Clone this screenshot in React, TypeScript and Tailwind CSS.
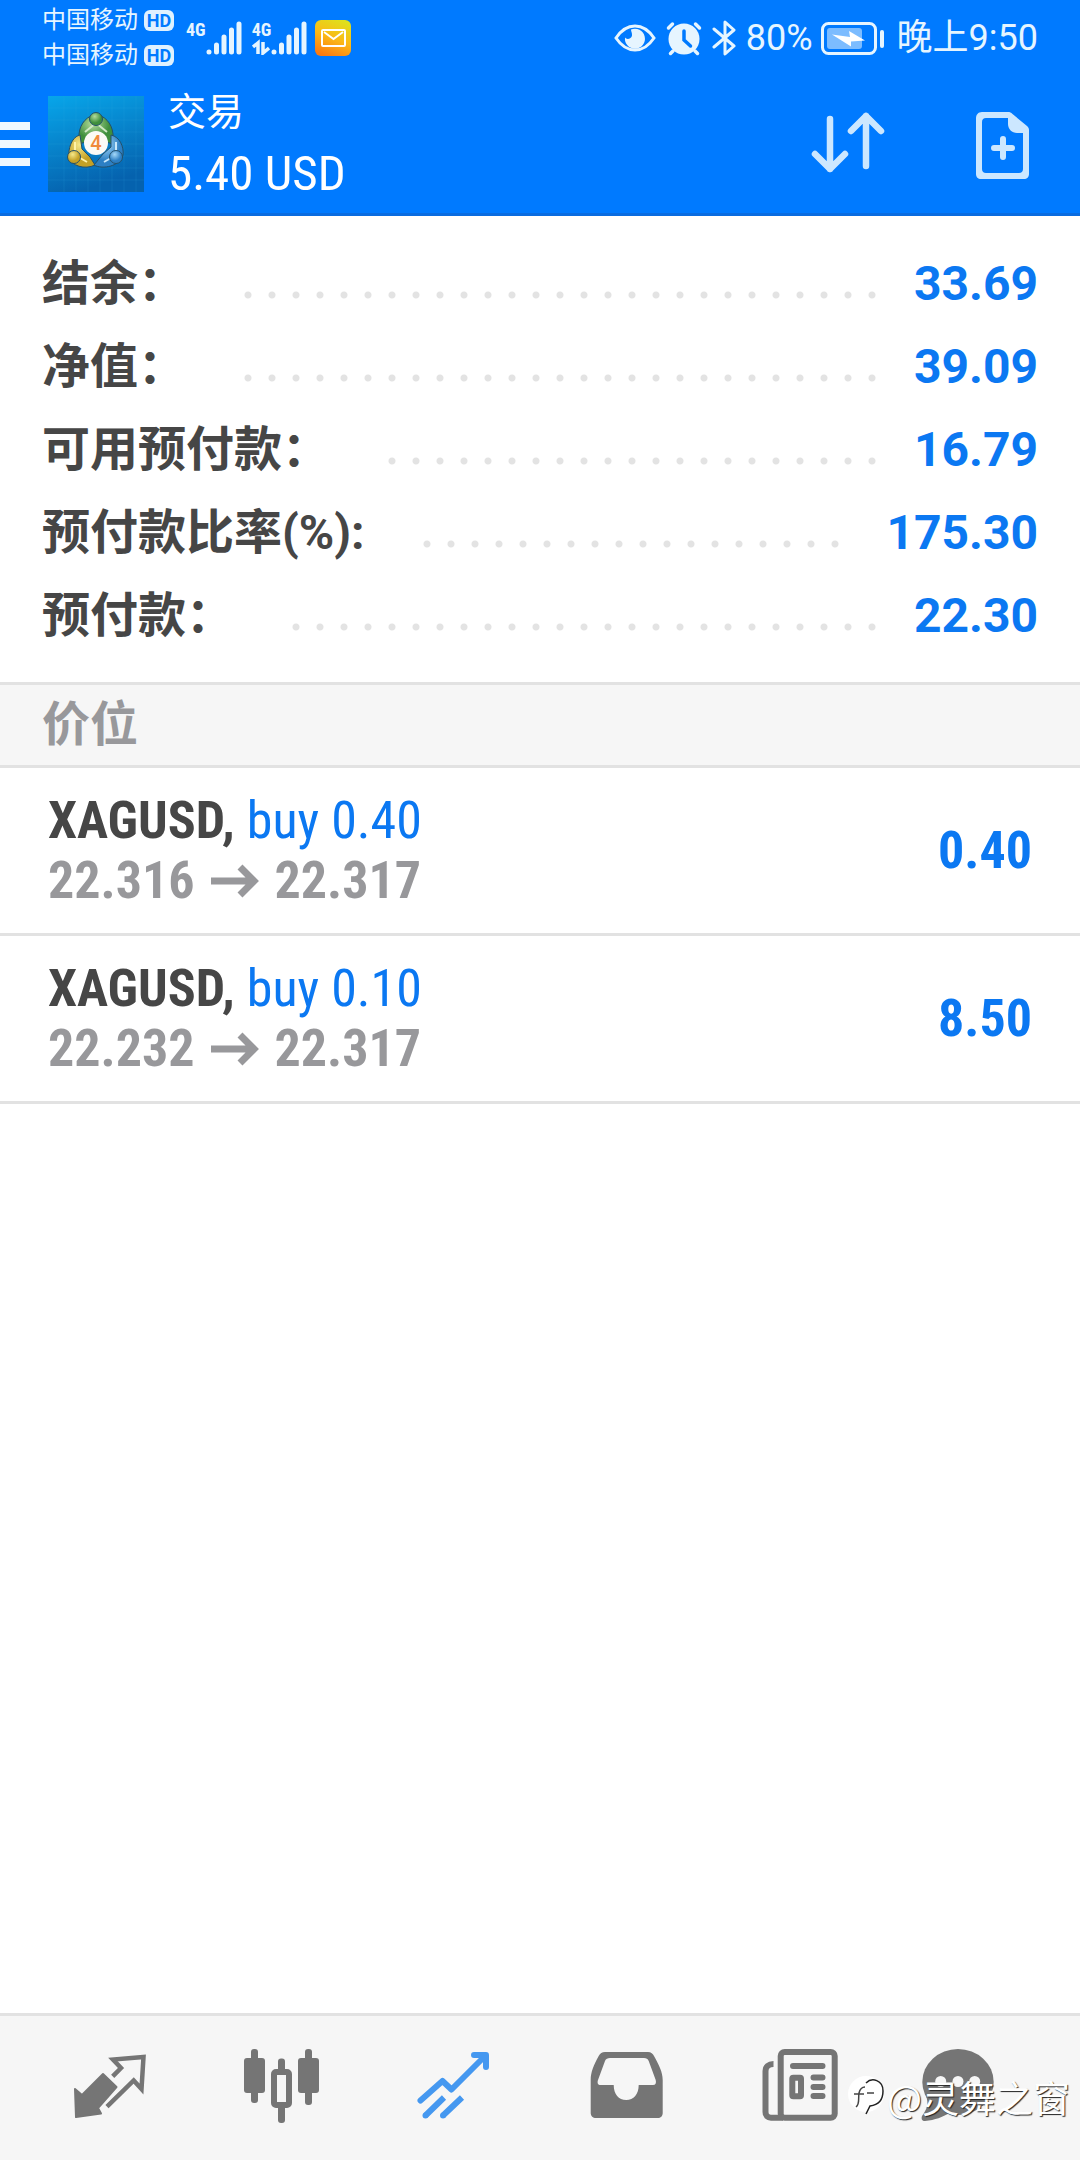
import type { ReactNode } from "react";

const accountRows = [
  { label: "结余：", value: "33.69" },
  { label: "净值：", value: "39.09" },
  { label: "可用预付款：", value: "16.79" },
  { label: "预付款比率(%):", value: "175.30" },
  { label: "预付款：", value: "22.30" },
];

const positions = [
  { id: 1, symbol: "XAGUSD", side: "buy 0.40", open: "22.316", current: "22.317", profit: "0.40" },
  { id: 2, symbol: "XAGUSD", side: "buy 0.10", open: "22.232", current: "22.317", profit: "8.50" },
];

function SignalBars() {
  return (
    <svg className="w-9 h-9" viewBox="0 0 36 36" stroke="currentColor" strokeWidth="5" strokeLinecap="round">
      <path d="M3 32v0M10.500 25v7M18 17v15M25.500 10v22M33 4v28" />
    </svg>
  );
}

function Carrier() {
  return (
    <div className="flex items-center gap-1.5 h-[35px]">
      <span className="text-[24px] leading-none">中国移动</span>
      <span className="w-[30px] h-[21px] rounded-md bg-[#dff1ff] text-[#007aff] text-[18px] leading-[21px] font-bold text-center">
        HD
      </span>
    </div>
  );
}

function StatusBar() {
  return (
    <div className="flex items-center justify-between h-[75px] pl-[42px] pr-[42px] text-[#e6f5ff]">
      <div className="flex items-center">
        <div>
          <Carrier />
          <Carrier />
        </div>
        <div className="flex items-center ml-3">
          <div className="text-[18px] leading-[18px] font-bold pb-4 font-[family-name:'Roboto_Condensed','Roboto',sans-serif]">4G</div>
          <SignalBars />
        </div>
        <div className="flex items-center ml-2.5">
          <div className="flex flex-col">
            <div className="text-[18px] leading-[18px] font-bold font-[family-name:'Roboto_Condensed','Roboto',sans-serif]">4G</div>
            <svg className="w-[18px] h-4" viewBox="0 0 18 16" fill="none" stroke="currentColor" strokeWidth="3.500">
              <path d="M1 8l5-4v11M11 3v11l6-5" />
            </svg>
          </div>
          <SignalBars />
        </div>
        <svg className="w-9 h-9 ml-2" viewBox="0 0 36 36">
          <defs>
            <linearGradient id="mail" x1="0.7" y1="0" x2="0.3" y2="1">
              <stop offset="0" stopColor="#dfe01c" />
              <stop offset="0.5" stopColor="#fbb917" />
              <stop offset="1" stopColor="#fb7a12" />
            </linearGradient>
          </defs>
          <rect width="36" height="36" rx="6" fill="url(#mail)" />
          <rect x="7" y="10" width="23" height="16" rx="1" fill="none" stroke="#fff" strokeWidth="2" />
          <path d="M9 12l9.500 7 9.500-7" fill="none" stroke="#fff" strokeWidth="2" />
        </svg>
      </div>

      <div className="flex items-center">
        <svg className="w-[42px] h-9" viewBox="0 0 42 36">
          <path d="M2 18Q10 6 21 6T40 18Q32 30 21 30T2 18z" fill="none" stroke="currentColor" strokeWidth="3" />
          <path d="M17 9.500a10 10 0 1 1-6 8c1.500 2.500 6.500 1.500 7-2 .3-2.500-1-4-1-6z" fill="currentColor" />
        </svg>
        <svg className="w-9 h-9 ml-2.5" viewBox="0 0 36 36" fill="none" stroke="currentColor" strokeLinecap="round">
          <circle cx="18" cy="19" r="15.500" fill="currentColor" stroke="none" />
          <path d="M2.500 8l4-4M33.500 8l-4-4M7 31l-2.500 2.500M29 31l2.500 2.500" strokeWidth="3.500" />
          <path d="M18 11v9l6.500 6" stroke="#007aff" strokeWidth="3.500" />
        </svg>
        <svg className="w-6 h-9 ml-2.5" viewBox="0 0 24 36" fill="none" stroke="currentColor" strokeWidth="3" strokeLinejoin="round" strokeLinecap="round">
          <path d="M2 9l20 17-9 8V2l9 8L2 27" />
        </svg>
        <span className="ml-2.5 text-[36px] leading-none">80%</span>
        <svg className="w-16 h-9 ml-2" viewBox="0 0 64 36">
          <rect x="1.500" y="3.500" width="53" height="30" rx="6" fill="none" stroke="currentColor" strokeWidth="3" />
          <rect x="6" y="8" width="35" height="21" rx="3" fill="#7cbcff" />
          <path d="M11 14.500l18 2.500-1-6 16 9.500-14 1v5z" fill="#fff" />
          <path d="M61 12v14" stroke="currentColor" strokeWidth="4" strokeLinecap="round" />
        </svg>
        <span className="ml-3 text-[36px] leading-none">晚上9:50</span>
      </div>
    </div>
  );
}

function AppLogo() {
  return (
    <svg className="w-24 h-24" viewBox="0 0 96 96">
      <defs>
        <linearGradient id="sky" x1="0" y1="0" x2="0.3" y2="1">
          <stop offset="0" stopColor="#07a6ea" />
          <stop offset="0.5" stopColor="#0784cc" />
          <stop offset="1" stopColor="#0562ae" />
        </linearGradient>
        <radialGradient id="green" cx="0.4" cy="0.3">
          <stop offset="0" stopColor="#b4dc9c" />
          <stop offset="1" stopColor="#3f8f3c" />
        </radialGradient>
        <radialGradient id="gold" cx="0.4" cy="0.3">
          <stop offset="0" stopColor="#f5e88a" />
          <stop offset="1" stopColor="#c4a126" />
        </radialGradient>
        <radialGradient id="azure" cx="0.4" cy="0.3">
          <stop offset="0" stopColor="#a5d8f8" />
          <stop offset="1" stopColor="#2c7fc4" />
        </radialGradient>
      </defs>
      <rect width="96" height="96" fill="url(#sky)" />
      <path
        d="M16 0v96M28 0v96M40 0v96M52 0v96M64 0v96M76 0v96M88 0v96M0 12h96M0 24h96M0 36h96M0 48h96M0 60h96M0 72h96M0 84h96"
        stroke="#39b4ee"
        strokeOpacity="0.15"
      />
      <g stroke="#24506a" strokeWidth="1">
        <path d="M48 19c8 0 16 8 17 19v10l-17-5-17 5V38c1-11 9-19 17-19z" fill="url(#green)" />
        <path d="M32 39c-9 2-12 15-11 22 2 9 16 13 26 8l-5-8-8-8z" fill="url(#gold)" />
        <path d="M63 39c9 2 13 12 12 20-3 11-20 15-29 10l9-11 8-7z" fill="url(#azure)" />
      </g>
      <path d="M48 27l-11 9M48 27l11 9" stroke="#cfe8c4" strokeWidth="2" />
      <path d="M27 59V46M27 59l12 7" stroke="#fff3a8" strokeWidth="2" />
      <path d="M68 59V46M68 59l-12 7" stroke="#c8e8fb" strokeWidth="2" />
      <g stroke="#24506a" strokeWidth="1">
        <circle cx="48" cy="23" r="6.500" fill="url(#green)" />
        <circle cx="26" cy="61" r="6.500" fill="url(#gold)" />
        <circle cx="68" cy="61" r="6.500" fill="url(#azure)" />
      </g>
      <circle cx="48" cy="47" r="12" fill="#fbfaf6" />
      <text x="48" y="54" textAnchor="middle" fontSize="20" fontFamily="Roboto" fontWeight="500" fill="#f08a3c">
        4
      </text>
    </svg>
  );
}

function Header() {
  return (
    <header className="bg-[#007aff] border-b-3 border-[#0a6ce0] text-white">
      <StatusBar />
      <div className="flex items-center h-[138px] pr-[38px]">
        <button aria-label="菜单" className="flex flex-col gap-2.5 w-[30px]">
          <span className="h-2 bg-[#eff8ff]" />
          <span className="h-2 bg-[#eff8ff]" />
          <span className="h-2 bg-[#eff8ff]" />
        </button>
        <div className="ml-[18px]">
          <AppLogo />
        </div>
        <div className="ml-6 flex-1">
          <h1 className="text-[38px] leading-[60px]">交易</h1>
          <p className="text-[49px] leading-[64px] font-[family-name:'Roboto_Condensed','Roboto',sans-serif]">5.40 USD</p>
        </div>
        <button aria-label="排序" className="text-[#cce7ff]">
          <svg className="w-[76px] h-[72px]" viewBox="0 2 76 72" fill="none" stroke="currentColor" strokeWidth="6.500" strokeLinecap="round" strokeLinejoin="round">
            <path d="M20 13v50M5 48l15 15 15-15" />
            <path d="M56 60V10M41 25l15-15 15 15" />
          </svg>
        </button>
        <button aria-label="新订单" className="ml-[84px] text-[#cce7ff]">
          <svg className="w-[72px] h-[72px]" viewBox="0 2 72 72">
            <path
              d="M12 6h26c2 0 3 .5 4.500 2L57 20c1.500 1.500 2 2.500 2 4v44c0 3-2 5-5 5H11c-3 0-5-2-5-5V12c0-3 2-6 6-6zM16 12c-2.500 0-4 1.500-4 4v47c0 2.500 1.500 4 4 4h33c2.500 0 4-1.500 4-4V27h-6c-5 0-9-4-9-9v-6z"
              fill="currentColor"
              fillRule="evenodd"
            />
            <path d="M24 42h18M33 33v18" stroke="currentColor" strokeWidth="6" strokeLinecap="round" />
          </svg>
        </button>
      </div>
    </header>
  );
}

function NavIcon({ label, active, children }: { label: string; active?: boolean; children: ReactNode }) {
  return (
    <button aria-label={label} className={active ? "flex-1 flex justify-center text-[#4598f0]" : "flex-1 flex justify-center text-[#757575]"}>
      <svg className="w-20 h-20 overflow-visible" viewBox="0 0 80 80" fill="currentColor">
        {children}
      </svg>
    </button>
  );
}

function BottomNav() {
  return (
    <nav className="flex bg-[#f6f6f6] border-t-3 border-[#e2e2e2] px-6 pt-[30px] pb-[34px]">
      <NavIcon label="行情">
        <path d="M5 43l7 6 21-21 13.500 13L28 62l3 5.500-25 3.500z" stroke="currentColor" strokeWidth="2" strokeLinejoin="round" />
        <path d="M42.700 30.300L51 22l-8-8.500 30.500-2.500L71.500 43l-7.800-8.500L37 60.700" fill="none" stroke="currentColor" strokeWidth="4.500" />
      </NavIcon>
      <NavIcon label="图表">
        <rect x="2" y="12" width="21" height="35" rx="3" />
        <rect x="9" y="3" width="7" height="54" rx="3" />
        <rect x="56" y="12" width="21" height="35" rx="3" />
        <rect x="63" y="3" width="7" height="56" rx="3" />
        <rect x="36" y="12.500" width="7" height="16" rx="3" />
        <rect x="36" y="58" width="7" height="19" rx="3" />
        <rect x="32" y="26" width="15" height="33" rx="2" fill="none" stroke="currentColor" strokeWidth="6" />
      </NavIcon>
      <NavIcon label="交易" active>
        <g fill="none" stroke="currentColor" strokeWidth="6" strokeLinecap="round" strokeLinejoin="round">
          <path d="M6.500 54.500l22-19.500 9 8.500L71 10" />
          <path d="M60 9h12v12" />
        </g>
        <path d="M11.500 69.500L30 51.500M29 69.500l19-18" stroke="currentColor" strokeWidth="6" />
        <circle cx="11.500" cy="69.500" r="3" />
        <circle cx="29" cy="69.500" r="3" />
      </NavIcon>
      <NavIcon label="历史">
        <path
          d="M19 6h43c3 0 5 2 6 4 5 9 8.700 16 8.700 24v33c0 3-2 5-5 5H10c-3 0-5.300-2-5.300-5V34c0-8 3-15 8-24 1.500-2.500 3.300-4 6.300-4zM24 12c-2.500 0-4 .8-5 3l-7 19c-1 3 0 5 2.500 5h13.200c0 9 5 15 12.500 15s12.500-6 12.500-15H67c2.500 0 3.500-2 2.700-5l-7-19c-1-2.200-2.200-3-4.700-3z"
          fillRule="evenodd"
        />
      </NavIcon>
      <NavIcon label="新闻">
        <rect x="22.700" y="6" width="54" height="65.700" rx="4" fill="none" stroke="currentColor" strokeWidth="6" />
        <path d="M15.500 18c-5 0-8 3-8 7v41c0 3.500 2 5.700 5.500 5.700h12" fill="none" stroke="currentColor" strokeWidth="6" />
        <path d="M35 20h29.500M55.500 31.500h9M55.500 41h9M55.500 50h9" stroke="currentColor" strokeWidth="6" strokeLinecap="round" />
        <rect x="34.300" y="31.700" width="8.700" height="18.600" rx="1" fill="none" stroke="currentColor" strokeWidth="6" />
      </NavIcon>
      <NavIcon label="消息">
        <ellipse cx="28" cy="36" rx="35.700" ry="33" />
        <path d="M-4 50c3 8 1 13-4 20-1 3 0 5 3 5 10-1 18-4 24-8z" />
        <g fill="#f6f6f6">
          <circle cx="10.700" cy="35.500" r="5.500" />
          <circle cx="28" cy="35.500" r="5.500" />
          <circle cx="44.700" cy="35.500" r="5.500" />
        </g>
      </NavIcon>
    </nav>
  );
}

function Watermark() {
  return (
    <div className="absolute right-2.5 bottom-10 flex items-center text-white pointer-events-none font-[family-name:'Noto_Sans_CJK_SC',sans-serif]">
      <svg className="w-10 h-[46px]" viewBox="0 0 40 46" fill="none">
        <circle cx="19" cy="20" r="18" fill="#fff" />
        <path d="M19 9c6-6 17-3 17 8 0 9-5 14-13 15l-4 8" stroke="#222" strokeWidth="1.500" />
        <path d="M9 33c4-3 2-8 3-14 1-4 3-6 6-6M7 20h10M20 19h7" stroke="#444" strokeWidth="1.500" />
      </svg>
      <span className="text-[37px] leading-[46px] [text-shadow:1px_1px_1px_#222]">@灵舞之窗</span>
    </div>
  );
}

export default function App() {
  return (
    <div className="relative min-h-screen flex flex-col bg-white font-[family-name:'Roboto','Noto_Sans_CJK_SC',sans-serif]">
      <Header />
      <main className="flex-1">
        <dl className="px-[42px] pt-[26px] pb-[25px] text-[48px] leading-[83px] font-bold">
          {accountRows.map((row) => (
            <div key={row.label} className="flex">
              <dt className="text-[#464646]">{row.label}</dt>
              <div className="flex-1 self-center h-2 ml-[50px] mr-8 mt-[22px] bg-[radial-gradient(circle,#e3e3e3_3px,transparent_4px)] bg-[length:24px_8px]" />
              <dd className="text-[#0b78f2]">{row.value}</dd>
            </div>
          ))}
        </dl>

        <h2 className="border-y-3 border-[#e2e2e2] bg-[#f6f6f6] px-[42px] text-[48px] leading-[80px] font-bold text-[#98989b]">
          价位
        </h2>

        <ul>
          {positions.map((p) => (
            <li
              key={p.id}
              className="flex items-center justify-between h-[168px] px-12 border-b-3 border-[#e2e2e2] text-[52px] leading-[60px] font-bold font-[family-name:'Roboto_Condensed','Roboto',sans-serif]"
            >
              <div>
                <p className="text-[#464646]">
                  {p.symbol}, <span className="font-normal text-[#0b78f2]">{p.side}</span>
                </p>
                <p className="flex items-center text-[#98989b]">
                  {p.open}
                  <svg className="w-12 h-9 mx-4" viewBox="0 0 48 36" fill="none" stroke="currentColor" strokeWidth="7">
                    <path d="M0 18h43M29 4l14 14-14 14" />
                  </svg>
                  {p.current}
                </p>
              </div>
              <span className="text-[#0b78f2]">{p.profit}</span>
            </li>
          ))}
        </ul>
      </main>
      <BottomNav />
      <Watermark />
    </div>
  );
}
